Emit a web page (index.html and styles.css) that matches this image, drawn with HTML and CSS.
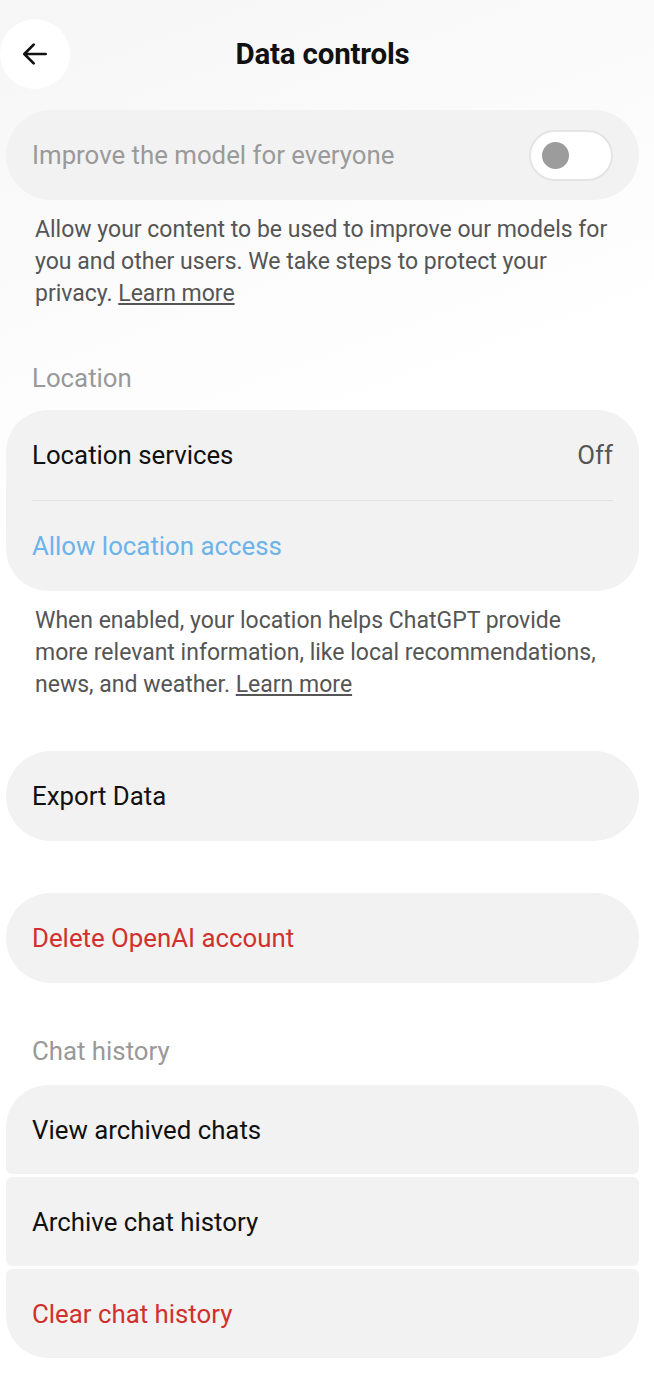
FILE: index.html
```html
<!DOCTYPE html>
<html lang="en">
<head>
    <meta charset="UTF-8">
    <meta name="viewport" content="width=device-width, initial-scale=1.0">
    <title>Data controls</title>
    <link rel="stylesheet" href="styles.css">
</head>
<body>
    <header class="topbar">
        <button class="back" aria-label="Back">
            <svg width="32" height="32" viewBox="0 0 24 24" fill="none" stroke="#111" stroke-width="2" stroke-linecap="round" stroke-linejoin="round">
                <path d="M20 12H4.5"/>
                <path d="M11 5l-7 7 7 7"/>
            </svg>
        </button>
        <h1>Data controls</h1>
    </header>

    <div class="card pill">
        <span class="label muted">Improve the model for everyone</span>
        <span class="toggle"><span class="knob"></span></span>
    </div>
    <p class="note">Allow your content to be used to improve our models for you and other users. We take steps to protect your privacy. <a href="#">Learn more</a></p>

    <h2 class="section">Location</h2>
    <div class="card group">
        <div class="row">
            <span class="label">Location services</span>
            <span class="value">Off</span>
        </div>
        <div class="divider"></div>
        <div class="row">
            <span class="label link">Allow location access</span>
        </div>
    </div>
    <p class="note">When enabled, your location helps ChatGPT provide more relevant information, like local recommendations, news, and weather. <a href="#">Learn more</a></p>

    <div class="card pill export">
        <span class="label">Export Data</span>
    </div>

    <div class="card pill delete">
        <span class="label danger">Delete OpenAI account</span>
    </div>

    <h2 class="section history">Chat history</h2>
    <div class="stack">
        <div class="card item first"><span class="label">View archived chats</span></div>
        <div class="card item"><span class="label">Archive chat history</span></div>
        <div class="card item last"><span class="label danger">Clear chat history</span></div>
    </div>
</body>
</html>
```

FILE: styles.css
```css
body { margin: 0; padding: 0 15px 20px 6px; font-family: Roboto, "Noto Sans", sans-serif; color: #111; background: linear-gradient(160deg, #f6f6f6 0%, #ffffff 35%); min-height: 1378px; box-sizing: border-box; }
.topbar { position: relative; height: 110px; display: flex; align-items: center; justify-content: center; }
.back { position: absolute; left: -6px; top: 19px; width: 70px; height: 70px; border-radius: 50%; border: none; background: #fff; display: flex; align-items: center; justify-content: center; padding: 0; margin: 0; }
.topbar h1 { margin: 0; font-size: 29.5px; font-weight: 700; margin-left: 0; margin-top: -2px; letter-spacing: -0.2px; }
.card { background: #f2f2f2; display: flex; align-items: center; }
.pill { height: 90px; border-radius: 45px; padding: 0 26px; justify-content: space-between; }
.label { font-size: 25.8px; }
.muted { color: #9a9a9a; }
.danger { color: #d0312d; }
.link { color: #6cb3ec; }
.value { font-size: 25.8px; color: #555; }
.toggle { width: 84px; height: 51px; border: 2px solid #e4e4e4; border-radius: 26px; background: #fff; display: flex; align-items: center; box-sizing: border-box; padding-left: 11px; margin-right: 0; }
.knob { width: 27px; height: 27px; border-radius: 50%; background: #9c9c9c; }
.note { margin: 14px 0 0 29px; padding-right: 24px; font-size: 23px; line-height: 32px; color: #555; }
.note a { color: #555; }
.section { margin: 50px 0 0 26px; font-size: 25.8px; font-weight: 400; color: #999; line-height: 36px; height: 36px; }
.group { flex-direction: column; align-items: stretch; border-radius: 42px; margin-top: 14px; }
.row { height: 90px; display: flex; align-items: center; justify-content: space-between; padding: 0 26px; }
.divider { height: 1px; background: #e2e2e2; margin: 0 26px; }
.export { margin-top: 50px; }
.delete { margin-top: 52px; }
.history { margin-top: 50px; }
.stack { margin-top: 16px; display: flex; flex-direction: column; gap: 3px; }
.item { height: 89px; padding: 0 26px; border-radius: 6px; }
.item.first { border-radius: 42px 42px 6px 6px; }
.item.last { border-radius: 6px 6px 42px 42px; }
```
